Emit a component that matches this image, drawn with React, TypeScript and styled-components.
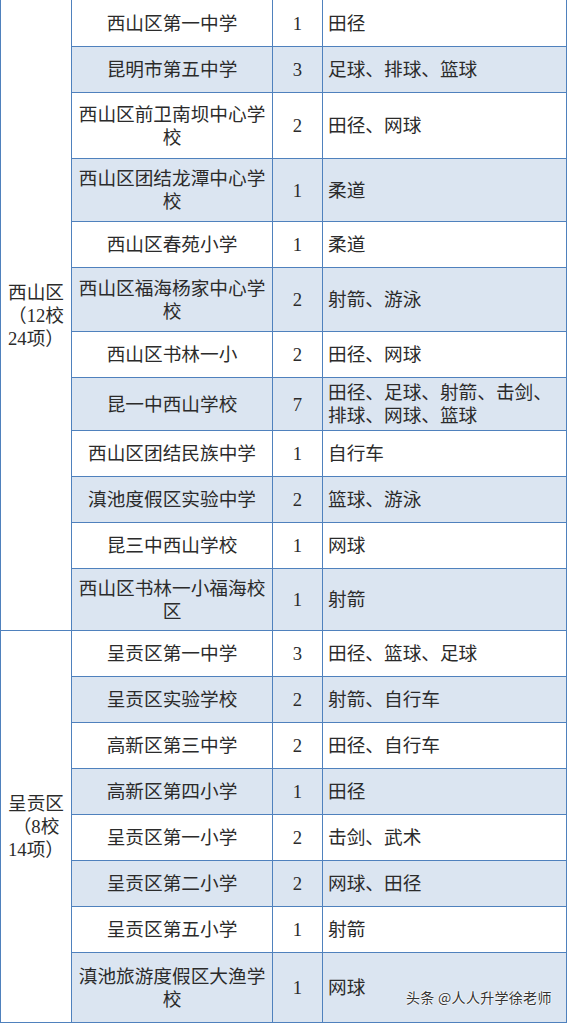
import React from "react";
import styled, { createGlobalStyle } from "styled-components";

const Global = createGlobalStyle`
  html, body { margin: 0; padding: 0; background: #ffffff; }
  body { font-family: "Liberation Serif", "Noto Sans CJK SC", serif; }
`;

type Row = { name: string; count: number; sports: string; h: number };
type District = { label: string; rows: Row[] };

const data: District[] = [
  {
    label: "西山区（12校24项）",
    rows: [
      { name: "西山区第一中学", count: 1, sports: "田径", h: 47 },
      { name: "昆明市第五中学", count: 3, sports: "足球、排球、篮球", h: 46 },
      { name: "西山区前卫南坝中心学校", count: 2, sports: "田径、网球", h: 66 },
      { name: "西山区团结龙潭中心学校", count: 1, sports: "柔道", h: 63 },
      { name: "西山区春苑小学", count: 1, sports: "柔道", h: 46 },
      { name: "西山区福海杨家中心学校", count: 2, sports: "射箭、游泳", h: 64 },
      { name: "西山区书林一小", count: 2, sports: "田径、网球", h: 46 },
      { name: "昆一中西山学校", count: 7, sports: "田径、足球、射箭、击剑、排球、网球、篮球", h: 53 },
      { name: "西山区团结民族中学", count: 1, sports: "自行车", h: 46 },
      { name: "滇池度假区实验中学", count: 2, sports: "篮球、游泳", h: 46 },
      { name: "昆三中西山学校", count: 1, sports: "网球", h: 46 },
      { name: "西山区书林一小福海校区", count: 1, sports: "射箭", h: 62 },
    ],
  },
  {
    label: "呈贡区（8校14项）",
    rows: [
      { name: "呈贡区第一中学", count: 3, sports: "田径、篮球、足球", h: 46 },
      { name: "呈贡区实验学校", count: 2, sports: "射箭、自行车", h: 46 },
      { name: "高新区第三中学", count: 2, sports: "田径、自行车", h: 46 },
      { name: "高新区第四小学", count: 1, sports: "田径", h: 46 },
      { name: "呈贡区第一小学", count: 2, sports: "击剑、武术", h: 46 },
      { name: "呈贡区第二小学", count: 2, sports: "网球、田径", h: 46 },
      { name: "呈贡区第五小学", count: 1, sports: "射箭", h: 46 },
      { name: "滇池旅游度假区大渔学校", count: 1, sports: "网球", h: 70 },
    ],
  },
];

const BORDER = "#4f81bd";
const SHADE = "#dbe5f1";

const Page = styled.div`
  position: relative;
  width: 567px;
  height: 1025px;
  overflow: hidden;
  background: #fff;
`;

const Grid = styled.div<{ $rows: string }>`
  display: grid;
  grid-template-columns: 71px 201px 50px 244px;
  grid-template-rows: ${(p) => p.$rows};
  border-left: 1px solid ${BORDER};
  width: 567px;
  box-sizing: border-box;
  color: #2b2b2b;
  font-size: 18.67px;
  line-height: 23px;
  text-spacing-trim: space-all;
  text-autospace: no-autospace;
`;

const Cell = styled.div<{ $shaded?: boolean }>`
  box-sizing: border-box;
  border-right: 1px solid ${BORDER};
  border-bottom: 1px solid ${BORDER};
  background: ${(p) => (p.$shaded ? SHADE : "#fff")};
  display: flex;
  align-items: center;
  padding: 0 5px;
  min-width: 0;
`;

const DistrictCell = styled(Cell)<{ $span: number }>`
  grid-row: span ${(p) => p.$span};
  grid-column: 1;
  justify-content: center;
  text-align: center;
  padding: 0 5px;
`;

const NameCell = styled(Cell)`
  grid-column: 2;
  justify-content: center;
  text-align: center;
`;

const CountCell = styled(Cell)`
  grid-column: 3;
  justify-content: center;
`;

const SportsCell = styled(Cell)`
  grid-column: 4;
  justify-content: flex-start;
  text-align: left;
`;

const Watermark = styled.div`
  position: absolute;
  left: 406px;
  top: 988px;
  font-family: "Noto Sans CJK SC", sans-serif;
  font-size: 14px;
  line-height: 18px;
  letter-spacing: 0.3px;
  color: #333;
  white-space: nowrap;
  text-shadow: 0 0 2px #fff, 0 0 2px #fff, 0 0 1px #fff;
`;

export default function App() {
  const allRows = data.flatMap((d) => d.rows);
  const rowsTemplate = allRows.map((r) => `${r.h}px`).join(" ");
  return (
    <Page>
      <Global />
      <Grid $rows={rowsTemplate}>
        {data.map((d) =>
          d.rows.map((r, i) => {
            const shaded = i % 2 === 1;
            return (
              <React.Fragment key={d.label + r.name}>
                {i === 0 && (
                  <DistrictCell $span={d.rows.length}>
                    <span>{d.label}</span>
                  </DistrictCell>
                )}
                <NameCell $shaded={shaded}>
                  <span>{r.name}</span>
                </NameCell>
                <CountCell $shaded={shaded}>{r.count}</CountCell>
                <SportsCell $shaded={shaded}>
                  <span>{r.sports}</span>
                </SportsCell>
              </React.Fragment>
            );
          })
        )}
      </Grid>
      <Watermark>头条 @人人升学徐老师</Watermark>
    </Page>
  );
}
